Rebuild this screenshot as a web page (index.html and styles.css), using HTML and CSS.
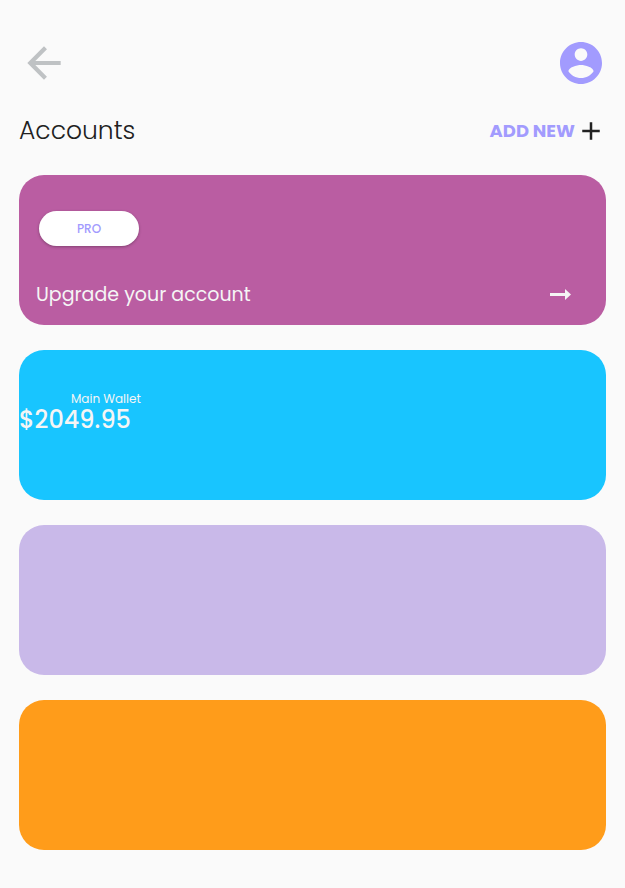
FILE: index.html
```html
<!DOCTYPE html>
<html lang="en">
<head>
<meta charset="utf-8">
<meta name="viewport" content="width=device-width, initial-scale=1">
<title>Accounts</title>
<link rel="stylesheet" href="styles.css">
</head>
<body>
<header class="topbar">
  <button class="icon-button" type="button" aria-label="Back">
    <svg class="back-icon" viewBox="0 0 24 24"><path d="M20 11H7.83l5.59-5.59L12 4l-8 8 8 8 1.41-1.41L7.83 13H20v-2z"/></svg>
  </button>
  <button class="icon-button" type="button" aria-label="Profile">
    <svg class="profile-icon" viewBox="2 2 20 20"><path d="M12 2C6.480 2 2 6.480 2 12s4.480 10 10 10 10-4.480 10-10S17.520 2 12 2zm0 3c1.660 0 3 1.340 3 3s-1.340 3-3 3-3-1.340-3-3 1.340-3 3-3zm0 14.200c-2.500 0-4.710-1.280-6-3.220.03-1.990 4-3.080 6-3.080 1.990 0 5.970 1.090 6 3.080-1.290 1.940-3.500 3.220-6 3.220z"/></svg>
  </button>
</header>
<main>
  <div class="heading">
    <h1 class="title">Accounts</h1>
    <button class="add-button" type="button">ADD NEW
      <svg class="plus-icon" viewBox="0 0 24 24"><path d="M19 13h-6v6h-2v-6H5v-2h6V5h2v6h6v2z"/></svg>
    </button>
  </div>
  <div class="cards">
    <section class="card card-upgrade">
      <button class="pro-button" type="button">PRO</button>
      <a class="upgrade-link" href="#upgrade">Upgrade your account
        <svg class="arrow-icon" viewBox="0 0 22 12"><path d="M1 5H16V1L22 6.500 16 12V8H1z"/></svg>
      </a>
    </section>
    <section class="card card-wallet">
      <p class="wallet-name">Main Wallet</p>
      <p class="wallet-balance">$2049.95</p>
    </section>
    <section class="card card-lavender"></section>
    <section class="card card-orange"></section>
  </div>
</main>
</body>
</html>
```
FILE: styles.css
```css
* { box-sizing: border-box; }
body {
  margin: 0;
  padding: 38px 19px;
  background: #fafafa;
  color: #212121;
  font-family: Poppins, Lato, "Open Sans", sans-serif;
}
button { border: 0; padding: 0; background: none; font: inherit; }
h1, p { margin: 0; }
svg { display: block; fill: currentColor; }
.topbar { display: flex; align-items: center; justify-content: space-between; height: 50px; padding: 0 4px 0 0; }
.back-icon { width: 50px; height: 50px; color: #bfc2c4; }
.profile-icon { width: 42px; height: 42px; color: #a29bfe; }
.heading { display: flex; align-items: center; justify-content: space-between; height: 40px; margin: 23px 0 24px; }
.title { font-size: 25px; font-weight: 300; line-height: 40px; }
.add-button { display: flex; align-items: center; gap: 1px; font-size: 18px; font-weight: 700; line-height: 26px; color: #a29bfe; }
.plus-icon { width: 30px; height: 30px; color: #212121; }
.cards { display: grid; gap: 25px; }
.card { height: 150px; border-radius: 25px; }
.card-upgrade { padding: 36px 35px 0 17px; background: #ba5da2; }
.pro-button { display: block; width: 100px; height: 35px; margin-left: 3px; border-radius: 18px; background: #fff; box-shadow: 0 1px 3px rgb(0 0 0 / 30%); color: #a29bfe; font-size: 12px; font-weight: 500; }
.upgrade-link { display: flex; align-items: center; justify-content: space-between; height: 30px; margin-top: 33px; color: #f5f5f5; font-size: 19px; text-decoration: none; }
.arrow-icon { width: 22px; height: 12px; }
.card-wallet { padding-top: 41px; background: #18c5ff; color: #f5f5f5; }
.wallet-name { padding-left: 52px; font-size: 12px; line-height: 16px; }
.wallet-balance { font-size: 24px; font-weight: 500; line-height: 25px; }
.card-lavender { background: #c9b9e9; }
.card-orange { background: #ff9c1a; }
```
